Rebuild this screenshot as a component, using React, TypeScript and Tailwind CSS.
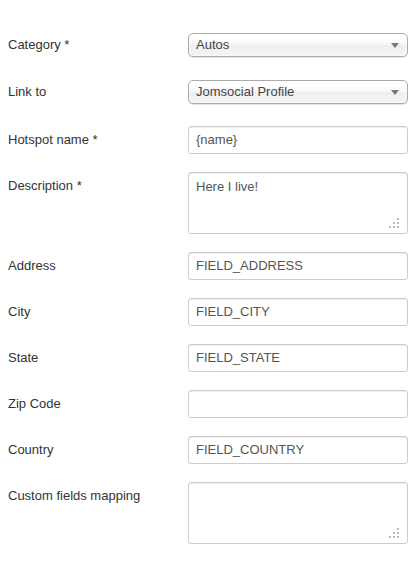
import React from "react";

const font = { fontFamily: '"Liberation Sans", Arial, sans-serif' };

function Label({ children, top }: { children: React.ReactNode; top?: boolean }) {
  return (
    <div
      className={`w-[180px] shrink-0 pl-2 text-[13px] leading-[18px] text-[#333] ${top ? "pt-[5px]" : ""}`}
    >
      {children}
    </div>
  );
}

function Select({ value }: { value: string }) {
  return (
    <div className="relative flex h-[24px] w-[220px] items-center rounded-[5px] border border-[#aaa] bg-[linear-gradient(#ffffff_20%,#f6f6f6_50%,#eeeeee_52%,#f4f4f4_100%)] pl-[7px] text-[13px] text-[#444] shadow-[inset_0_0_3px_#fff,0_1px_1px_rgba(0,0,0,0.1)]">
      <span>{value}</span>
      <svg className="absolute right-[8px] top-[9px]" width="8" height="5" viewBox="0 0 8 5">
        <polygon points="0,0 8,0 4,5" fill="#777" />
      </svg>
    </div>
  );
}

function Input({ value }: { value?: string }) {
  return (
    <div className="flex h-[28px] w-[220px] items-center rounded-[3px] border border-[#ccc] bg-white pl-[7px] text-[13px] text-[#555] shadow-[inset_0_1px_1px_rgba(0,0,0,0.075)]">
      {value}
    </div>
  );
}

function Textarea({ value }: { value?: string }) {
  return (
    <div className="relative h-[62px] w-[220px] rounded-[3px] border border-[#ccc] bg-white pl-[7px] pt-[5px] text-[13px] leading-[18px] text-[#555] shadow-[inset_0_1px_1px_rgba(0,0,0,0.075)]">
      {value}
      <svg className="absolute bottom-[4px] right-[7px]" width="12" height="12" viewBox="0 0 12 12">
        <rect x="9" y="1" width="2" height="2" fill="#bbb" />
        <rect x="5" y="5" width="2" height="2" fill="#bbb" />
        <rect x="9" y="5" width="2" height="2" fill="#bbb" />
        <rect x="1" y="9" width="2" height="2" fill="#bbb" />
        <rect x="5" y="9" width="2" height="2" fill="#bbb" />
        <rect x="9" y="9" width="2" height="2" fill="#bbb" />
      </svg>
    </div>
  );
}

export default function App() {
  return (
    <div className="h-[575px] w-[419px] bg-white pt-[33px]" style={font}>
      <div className="flex items-center">
        <Label>Category *</Label>
        <div className="pl-2"><Select value="Autos" /></div>
      </div>
      <div className="mt-[23px] flex items-center">
        <Label>Link to</Label>
        <div className="pl-2"><Select value="Jomsocial Profile" /></div>
      </div>
      <div className="mt-[22px] flex items-center">
        <Label>Hotspot name *</Label>
        <div className="pl-2"><Input value="{name}" /></div>
      </div>
      <div className="mt-[18px] flex items-start">
        <Label top>Description *</Label>
        <div className="pl-2"><Textarea value="Here I live!" /></div>
      </div>
      <div className="mt-[18px] flex items-center">
        <Label>Address</Label>
        <div className="pl-2"><Input value="FIELD_ADDRESS" /></div>
      </div>
      <div className="mt-[18px] flex items-center">
        <Label>City</Label>
        <div className="pl-2"><Input value="FIELD_CITY" /></div>
      </div>
      <div className="mt-[18px] flex items-center">
        <Label>State</Label>
        <div className="pl-2"><Input value="FIELD_STATE" /></div>
      </div>
      <div className="mt-[18px] flex items-center">
        <Label>Zip Code</Label>
        <div className="pl-2"><Input /></div>
      </div>
      <div className="mt-[18px] flex items-center">
        <Label>Country</Label>
        <div className="pl-2"><Input value="FIELD_COUNTRY" /></div>
      </div>
      <div className="mt-[18px] flex items-start">
        <Label top>Custom fields mapping</Label>
        <div className="pl-2"><Textarea /></div>
      </div>
    </div>
  );
}
